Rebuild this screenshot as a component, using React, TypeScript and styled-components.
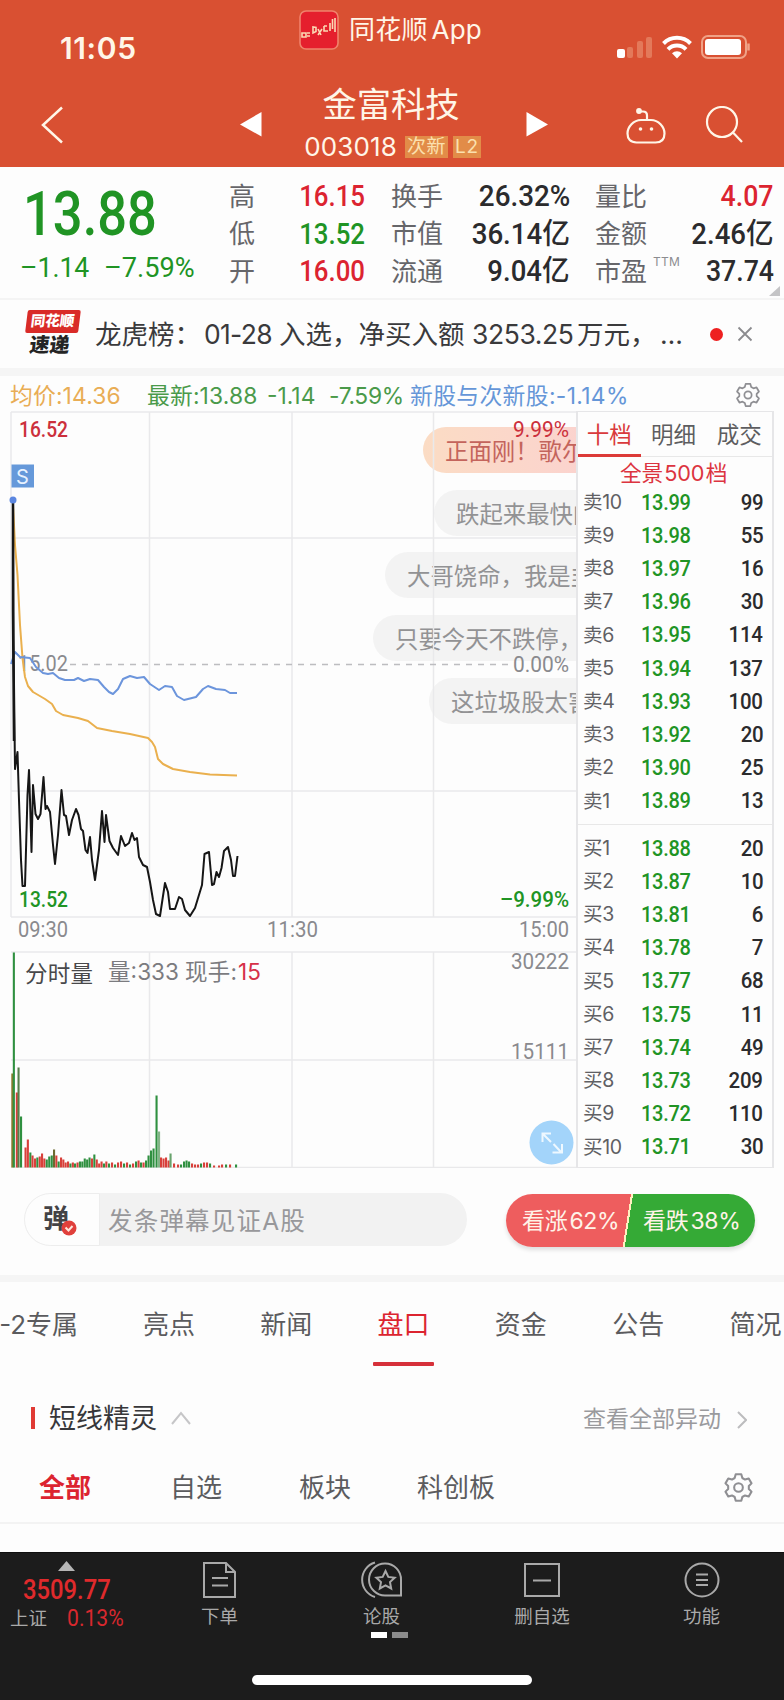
import React from "react";
import styled, { createGlobalStyle } from "styled-components";

const Global = createGlobalStyle`
  * { box-sizing: border-box; }
  body { margin: 0; background: #fdfdfd; }
`;

const C = {
  red: "#dc2430",
  green: "#209424",
  ink: "#2b2b2d",
  text: "#5b5b5e",
  line: "#ececec",
};

const Page = styled.div`
  width: 784px;
  height: 1700px;
  overflow: hidden;
  display: flex;
  flex-direction: column;
  background: #fdfdfd;
  color: ${C.text};
  font-family: Inter, "Noto Sans CJK SC", sans-serif;
  white-space: nowrap;
  line-height: 1;
`;

const Num = styled.span<{ $size: number; $color?: string; $weight?: number; $origin?: string; $sx?: number }>`
  display: inline-block;
  font-family: Roboto, "Noto Sans CJK SC", sans-serif;
  font-size: ${(p) => p.$size}px;
  font-weight: ${(p) => p.$weight ?? 500};
  color: ${(p) => p.$color ?? C.ink};
  line-height: 1;
  transform: scaleX(${(p) => p.$sx ?? 0.87});
  transform-origin: ${(p) => p.$origin ?? "left"} center;
`;

/* ---------- header ---------- */

const Header = styled.header`
  height: 167px;
  flex: none;
  background: #d95032;
  color: #fff6e8;
`;

const StatusBar = styled.div`
  height: 72px;
  display: grid;
  grid-template-columns: 1fr auto 1fr;
  align-items: start;
`;

const Clock = styled.div`
  padding: 33px 0 0 60px;
  font-size: 30px;
  font-weight: 600;
  letter-spacing: 0.6px;
`;

const AppBadge = styled.div`
  display: flex;
  align-items: center;
  gap: 10px;
  padding: 10px 3px 0 0;
  font-size: 26px;
  line-height: 40px;
  letter-spacing: 0.3px;
  word-spacing: -4px;
`;

const StatusIcons = styled.div`
  display: flex;
  justify-content: flex-end;
  padding: 34px 32px 0 0;
`;

const NavBar = styled.div`
  height: 95px;
  display: grid;
  grid-template-columns: 240px 22px 1fr 22px 236px;
  align-items: start;
`;

const NavSlot = styled.div<{ $top: number; $left?: number }>`
  display: flex;
  padding: ${(p) => p.$top}px 0 0 ${(p) => p.$left ?? 0}px;
`;

const TitleBlock = styled.div`
  display: flex;
  flex-direction: column;
  align-items: center;
  padding-top: 15px;
`;

const StockName = styled.div`
  font-size: 34.3px;
  line-height: 36px;
  margin-right: 6px;
`;

const CodeRow = styled.div`
  display: flex;
  align-items: center;
  gap: 5px;
  margin: 11px 3px 0 0;
  height: 26px;
`;

const Code = styled.span`
  font-size: 26px;
  letter-spacing: 0.1px;
  margin-right: 3px;
`;

const Tag = styled.span`
  height: 22px;
  padding: 0 2px;
  line-height: 22px;
  font-size: 19px;
  letter-spacing: 0.6px;
  background: #e28c48;
  color: #fbe0ae;
`;

/* ---------- quote summary ---------- */

const Summary = styled.section`
  height: 133px;
  flex: none;
  display: grid;
  grid-template-columns: 229px 136px 26px 179px 25px 179px;
  border-bottom: 2px solid #f4f4f4;
`;

const PriceBlock = styled.div`
  padding: 17px 0 0 20px;
`;

const BigPrice = styled.div`
  height: 70px;
  padding: 0 0 0 3px;
`;

const ChangeRow = styled.div`
  display: flex;
`;

const ChangeCell = styled.div`
  width: 84px;
`;

const StatColumn = styled.div<{ $col: number }>`
  grid-column: ${(p) => p.$col};
  padding-top: 11px;
`;

const StatRow = styled.div`
  height: 37.5px;
  display: flex;
  align-items: center;
  justify-content: space-between;
  font-size: 26px;
  color: #66666a;
  position: relative;
`;

const Sup = styled.sup`
  position: absolute;
  left: 58px;
  top: 3px;
  font-size: 12px;
  line-height: 12px;
  letter-spacing: 0.3px;
  color: #8c8c90;
`;

const Corner = styled.i`
  position: absolute;
  right: -6px;
  bottom: -5px;
  border-style: solid;
  border-width: 0 0 10px 11px;
  border-color: transparent transparent #c4c4c6 transparent;
`;

/* ---------- news line ---------- */

const News = styled.section`
  height: 68px;
  flex: none;
  display: flex;
  align-items: center;
  padding-left: 22px;
  font-size: 26.5px;
  color: #3a3a3c;
`;

const NewsLogo = styled.div`
  width: 58px;
  margin: -1px 15px 0 0;
  display: flex;
  flex-direction: column;
  align-items: center;
  transform: skewX(-7deg);
`;

const LogoTop = styled.div`
  width: 53px;
  height: 23px;
  background: #d92b28;
  border-radius: 2px;
  color: #fff;
  font-size: 14.5px;
  font-weight: 900;
  line-height: 22px;
  text-align: center;
`;

const LogoBottom = styled.div`
  color: #242424;
  font-size: 20px;
  font-weight: 900;
  line-height: 24px;
`;

const NewsText = styled.div`
  width: 595px;
  display: flex;
  align-items: center;
`;

const Run = styled.span<{ $w: number; $ls?: number }>`
  width: ${(p) => p.$w}px;
  letter-spacing: ${(p) => p.$ls ?? 0}px;
`;

const Dot = styled.i`
  width: 13px;
  height: 13px;
  margin: 0 14px 0 20px;
  border-radius: 50%;
  background: #ee2020;
`;

const Band = styled.div<{ $h: number }>`
  height: ${(p) => p.$h}px;
  flex: none;
  background: #f5f5f5;
`;

/* ---------- legend ---------- */

const Legend = styled.div`
  height: 35px;
  flex: none;
  display: flex;
  align-items: center;
  padding: 3px 0 0 10px;
  font-size: 22.8px;
`;

const LegendItem = styled.span<{ $w: number; $color: string; $ls?: number }>`
  width: ${(p) => p.$w}px;
  padding-top: 3px;
  color: ${(p) => p.$color};
  letter-spacing: ${(p) => p.$ls ?? 0.15}px;
`;

/* ---------- chart + order book ---------- */

const Market = styled.section`
  height: 757px;
  flex: none;
  display: flex;
`;

const ChartPane = styled.div`
  position: relative;
  width: 576px;
  overflow: hidden;
`;

const Bubble = styled.div<{ $x: number; $y: number; $hot?: boolean }>`
  position: absolute;
  left: ${(p) => p.$x}px;
  top: ${(p) => p.$y}px;
  height: 46px;
  width: 260px;
  padding-left: 22px;
  border-radius: 23px;
  line-height: 49px;
  font-size: 23.4px;
  color: ${(p) => (p.$hot ? "#c4645c" : "#929294")};
  background: ${(p) => (p.$hot ? "linear-gradient(90deg, #fbdcc4, #fbd3ce 60%)" : "#f3f3f3")};
`;

const ChartSvg = styled.svg`
  position: absolute;
  left: 0;
  top: 0;
`;

const Book = styled.div`
  width: 198px;
  border: 1px solid #e6e6e8;
  border-left-width: 2px;
  border-right-width: 2px;
`;

const BookTabs = styled.div`
  height: 45px;
  display: flex;
  border-bottom: 1px solid #e8e8e8;
`;

const BookTab = styled.div<{ $on?: boolean }>`
  width: ${(p) => (p.$on ? 63 : 66)}px;
  height: 45px;
  text-align: center;
  line-height: 45px;
  font-size: 22.5px;
  color: ${(p) => (p.$on ? "#d93a3c" : "#5d5d60")};
  border-bottom: ${(p) => (p.$on ? "3px solid #dc3a38" : "none")};
`;

const Depth = styled.div`
  height: 29px;
  padding-left: 42px;
  line-height: 32px;
  font-size: 21.7px;
  letter-spacing: -0.2px;
  word-spacing: -4.5px;
  color: #dc3440;
`;

const BookSide = styled.div`
  display: flex;
  flex-direction: column;
  height: 338px;
  & + & {
    border-top: 1px solid #e8e8e8;
    padding: 7px 0 0;
    height: 340px;
  }
`;

const BookRow = styled.div`
  height: 33.2px;
  flex: none;
  display: grid;
  grid-template-columns: 58px 1fr auto;
  align-items: center;
  padding: 0 9px 0 5px;
  font-size: 19.5px;
  letter-spacing: -0.3px;
  color: #606064;
`;

/* ---------- comment bar ---------- */

const ActionBar = styled.section`
  height: 107px;
  flex: none;
  display: flex;
  padding: 25px 0 0 24px;
`;

const CommentBox = styled.div`
  width: 443px;
  height: 53px;
  border-radius: 27px;
  display: flex;
  overflow: hidden;
  background: #f2f2f2;
  color: #98989b;
  font-size: 24.5px;
  letter-spacing: 1.2px;
  line-height: 56px;
`;

const DanmuToggle = styled.div`
  width: 76px;
  margin-right: 8px;
  padding: 0 0 0 18px;
  border: 1px solid #ededed;
  border-radius: 27px 0 0 27px;
  background: #fdfdfd;
  color: #434346;
  font-size: 26px;
  font-weight: 600;
  letter-spacing: 0;
  line-height: 50px;
  display: flex;
`;

const Check = styled.svg`
  margin: 26px 0 0 -8px;
`;

const Vote = styled.div`
  width: 249px;
  height: 53px;
  margin: 1px 0 0 39px;
  display: flex;
  border-radius: 27px;
  overflow: hidden;
  background: linear-gradient(99deg, #ee5d5e 0 123.5px, #fff0c0 123.5px 125.5px, #35aa36 125.5px);
  box-shadow: 0 3px 4px rgba(0, 0, 0, 0.12);
  color: #fff3e8;
  font-size: 23px;
  line-height: 55px;
`;

const VoteSide = styled.div`
  width: 121px;
  padding-left: 16px;
  letter-spacing: -0.35px;
  word-spacing: -4px;
`;

/* ---------- tabs ---------- */

const Tabs = styled.nav`
  height: 104px;
  flex: none;
  display: grid;
  grid-template-columns: repeat(7, 117.3px);
  margin-left: -7px;
  justify-content: start;
`;

const Tab = styled.div<{ $on?: boolean; $nudge?: number }>`
  padding-top: 25px;
  text-align: center;
  font-size: 26px;
  line-height: 36px;
  margin-left: ${(p) => p.$nudge ?? 0}px;
  color: ${(p) => (p.$on ? C.red : C.text)};
  &::after {
    content: "";
    display: block;
    width: 61px;
    height: 4px;
    margin: 19px auto 0;
    border-radius: 1px;
    background: ${(p) => (p.$on ? "#d6303a" : "transparent")};
  }
`;

const SectionHead = styled.div`
  height: 62px;
  flex: none;
  display: flex;
  align-items: center;
  padding: 2px 37px 0 31px;
`;

const Accent = styled.i`
  width: 4px;
  height: 22px;
  margin-right: 14px;
  background: #e03a34;
`;

const SectionTitle = styled.div`
  font-size: 27px;
  color: #37373a;
  margin-right: 14px;
`;

const More = styled.div`
  margin-left: auto;
  display: flex;
  align-items: center;
  gap: 16px;
  padding-top: 3px;
  font-size: 23px;
  color: #9a9a9d;
`;

const Filters = styled.div`
  height: 76px;
  flex: none;
  display: flex;
  align-items: center;
  padding: 5px 30px 0 39px;
  border-bottom: 2px solid #f3f3f3;
  font-size: 26px;
`;

const Filter = styled.div<{ $w: number; $on?: boolean }>`
  width: ${(p) => p.$w}px;
  font-weight: ${(p) => (p.$on ? 600 : 400)};
  color: ${(p) => (p.$on ? C.red : C.text)};
`;

/* ---------- bottom bar ---------- */

const Bottom = styled.footer`
  height: 148px;
  flex: none;
  margin-top: auto;
  background: #1c1c1c;
  color: #a9a9a9;
  border-top: 1px solid #0f0f0f;
  display: flex;
  flex-direction: column;
  align-items: center;
`;

const BottomRow = styled.div`
  width: 784px;
  height: 122px;
  display: grid;
  grid-template-columns: 141px 157px 167px 154px 165px;
`;

const IndexCell = styled.div`
  display: flex;
  flex-direction: column;
  padding: 8px 0 0 10px;
`;

const IndexLine = styled.div<{ $mt: number; $pl: number }>`
  display: flex;
  align-items: center;
  gap: 20px;
  margin-top: ${(p) => p.$mt}px;
  padding-left: ${(p) => p.$pl}px;
  font-size: 18.5px;
`;

const BottomItem = styled.div`
  display: flex;
  flex-direction: column;
  align-items: center;
  padding-top: 8px;
  font-size: 18.5px;
  gap: 9px;
`;

const Pager = styled.div`
  display: flex;
  gap: 5px;
  margin: -3px 0 0 16px;
`;

const PageMark = styled.i<{ $on?: boolean }>`
  width: 16px;
  height: 6px;
  background: ${(p) => (p.$on ? "#fff" : "#8b8b8b")};
`;

const HomeBar = styled.div`
  width: 280px;
  height: 10px;
  border-radius: 5px;
  background: #fff;
`;

/* ---------- icons ---------- */

const Gear = ({ size }: { size: number }) => (
  <svg width={size} height={size} viewBox="0 0 30 30" fill="none" stroke="#8f8f93" strokeWidth="2" strokeLinejoin="round">
    <path d="M12.3 2.2h5.4l1 3.6 2.6 1.5 3.6-1 2.7 4.7-2.6 2.6v2.8l2.6 2.6-2.7 4.7-3.6-1-2.6 1.5-1 3.6h-5.4l-1-3.6-2.6-1.5-3.6 1L2.4 19 5 16.4v-2.8L2.4 11l2.7-4.7 3.6 1 2.6-1.5z" />
    <circle cx="15" cy="15" r="4.2" />
  </svg>
);

const AppLogo = () => (
  <svg width="40" height="40" viewBox="0 0 40 40">
    <rect x="1" y="1" width="38" height="38" rx="6" fill="#e51f2d" stroke="#f0826c" strokeWidth="1.6" />
    <g fill="none" stroke="#fbd9b4" strokeWidth="1.6">
      <path d="M3 23h4v4H3zM8 23h3M8 26h3M14 17v6l3-1.500v-4zM19 19l3 6M19 25l4-6M25 16v5h4M25 16h3M31 13v8M33.500 9v10M36 8v14" />
    </g>
  </svg>
);

const Signals = () => (
  <svg width="136" height="26" viewBox="0 0 136 26">
    <rect x="1" y="15" width="8" height="9" rx="2" fill="#fff" />
    <g fill="#e3795a">
      <rect x="11" y="13" width="6" height="11" rx="2" />
      <rect x="21" y="7" width="6" height="17" rx="2" />
      <rect x="30" y="3" width="6" height="21" rx="2" />
    </g>
    <g fill="none" stroke="#fff" strokeWidth="4">
      <path d="M47.5 9.5a19 19 0 0 1 27 0" />
      <path d="M52 15.3a12.500 12.500 0 0 1 18 0" />
    </g>
    <path d="M61 24.500l-5-5.200a7.200 7.200 0 0 1 10 0z" fill="#fff" />
    <rect x="86" y="2" width="44" height="22" rx="6" fill="none" stroke="#f0a287" strokeWidth="2" />
    <rect x="89" y="5" width="36" height="16" rx="3" fill="#fff" />
    <path d="M132.500 9.500v7" stroke="#f0a287" strokeWidth="2.500" />
  </svg>
);

/* ---------- data ---------- */

type Pt = [number, number];

const priceLine: Pt[] = [
  [13, 499], [13.5, 640], [15, 769], [17.5, 752], [19, 800], [21, 860], [22.5, 886], [25, 886], [26, 850], [27.5, 795], [29, 770],
  [30, 800], [31.5, 852], [33, 785], [35.5, 814], [38, 819], [40.5, 814], [43.5, 777], [45.5, 809], [47, 806], [50, 812],
  [53, 845], [55, 864], [58, 835], [61.5, 790], [64, 815], [66, 816], [69, 835], [72, 820], [76, 809], [78.5, 815], [81, 829],
  [83, 831], [85.5, 850], [87.5, 853], [90, 837], [92, 860], [95, 880], [99, 850], [102, 811], [104.5, 842], [106, 815], [109.5, 841],
  [113, 848], [118, 855], [121, 836], [125, 846], [129, 843], [132, 833], [134.5, 840], [137, 838], [139, 857], [143, 865], [147, 867],
  [150, 882], [153, 900], [156, 914], [160, 916], [163, 896], [165, 883], [168, 892], [170, 909], [175, 909], [179, 897], [182, 899],
  [185, 910], [190, 916], [195, 908], [202, 885], [204.5, 854], [209, 852], [212, 885], [214, 884], [216.5, 872], [219, 877],
  [221.5, 868], [224, 851], [228, 847], [231, 860], [233, 876], [235, 876], [237.5, 856],
];

const averageLine: Pt[] = [
  [13, 505], [15, 545], [17.5, 575], [20, 625], [22.5, 658], [25, 677], [28, 686], [33, 692], [45, 699], [52, 704], [56, 711],
  [63, 715], [78, 718], [88, 721], [97, 728], [112, 731], [130, 734], [148, 738], [152, 742], [155, 747], [158, 759], [163, 764],
  [173, 769], [190, 772], [210, 774.5], [237, 775.5],
];

const sectorLine: Pt[] = [
  [11, 664], [15, 652], [20, 657], [30, 658], [36, 667], [43, 673], [48, 674], [53, 673], [59, 678], [65, 680], [74, 680], [78, 678],
  [84, 681], [90, 679], [98, 680], [104, 687], [109, 692], [113, 694], [118, 689], [123, 679], [130, 676], [137, 678], [144, 677],
  [150, 684], [159, 690], [165, 686], [172, 687], [177, 696], [184, 700], [196, 697], [203, 689], [208, 686], [216, 689], [225, 690],
  [230, 693], [237, 693],
];

const CHART_TOP = 411;
const toPoints = (pts: Pt[]) => pts.map(([x, y]) => `${x},${y - CHART_TOP}`).join(" ");

const R = "#d8403a";
const G = "#2f9040";
const volumes: [number, number, string][] = [
  [12.3, 94, "#8c7a2c"], [13.8, 215, G], [16.8, 75, R], [18.5, 100, "#557f4a"], [21, 51, G], [25.5, 20, R], [27.8, 28, R],
  [30.3, 15, G], [32.5, 12, R], [35, 9, R], [37.3, 10, G], [39.7, 11, R], [42, 14, R], [44.3, 9, R], [46.7, 8, G], [49.2, 11, G],
  [51.7, 12, G], [54, 18, "#6c6a30"], [56.3, 12, R], [58.6, 6, G], [61, 10, R], [63.3, 8, R], [65.6, 5, R], [68, 6, R], [70.4, 4, G],
  [72.8, 5, R], [75, 4, G], [77.5, 5, R], [79.9, 6, G], [82.3, 6, G], [84.7, 9, G], [87.1, 8, G], [89.5, 10, G], [91.9, 9, R],
  [94.3, 13, G], [96.7, 8, R], [99.1, 4, R], [101.5, 6, R], [103.9, 4, G], [106.3, 6, R], [109, 4, G], [112, 5, R], [115, 3, G],
  [118, 5, R], [121, 6, R], [124, 4, G], [127, 5, R], [130, 3, G], [133, 4, R], [136, 6, G], [138.5, 7, R], [141, 5, G], [143.5, 5, R],
  [146, 7, G], [148.5, 12, G], [151, 17, G], [153.5, 19, G], [156.5, 72, G], [159, 36, "#83b487"], [161, 10, R], [163.5, 9, R],
  [166, 10, R], [168.5, 7, R], [170.5, 14, "#68a36c"], [174, 4, R], [178, 3, R], [181, 3, G], [184, 6, G], [186.5, 7, G], [189, 6, G],
  [192, 4, R], [195, 3, R], [198, 3, R], [201, 4, G], [204, 5, R], [207, 5, R], [210, 4, G], [214, 2, R], [219, 2, R], [222, 3, R],
  [226, 3, G], [230, 3, R], [236, 3, G],
];

const sells: [string, string, string][] = [
  ["卖10", "13.99", "99"], ["卖9", "13.98", "55"], ["卖8", "13.97", "16"], ["卖7", "13.96", "30"], ["卖6", "13.95", "114"],
  ["卖5", "13.94", "137"], ["卖4", "13.93", "100"], ["卖3", "13.92", "20"], ["卖2", "13.90", "25"], ["卖1", "13.89", "13"],
];
const buys: [string, string, string][] = [
  ["买1", "13.88", "20"], ["买2", "13.87", "10"], ["买3", "13.81", "6"], ["买4", "13.78", "7"], ["买5", "13.77", "68"],
  ["买6", "13.75", "11"], ["买7", "13.74", "49"], ["买8", "13.73", "209"], ["买9", "13.72", "110"], ["买10", "13.71", "30"],
];

const stats: { col: number; rows: [string, string, string, number][] }[] = [
  { col: 2, rows: [["高", "16.15", C.red, 0.89], ["低", "13.52", C.green, 0.89], ["开", "16.00", C.red, 0.89]] },
  { col: 4, rows: [["换手", "26.32%", C.ink, 0.96], ["市值", "36.14亿", C.ink, 0.955], ["流通", "9.04亿", C.ink, 0.95]] },
  { col: 6, rows: [["量比", "4.07", C.red, 0.92], ["金额", "2.46亿", C.ink, 0.95], ["市盈", "37.74", C.ink, 0.92]] },
];

const AxisLabel = ({ x, y, w, fill, weight = 400, children }: { x: number; y: number; w: number; fill: string; weight?: number; children: string }) => (
  <text x={x} y={y - CHART_TOP} textLength={w} lengthAdjust="spacingAndGlyphs" fill={fill} fontWeight={weight} fontSize="22" fontFamily="Roboto, sans-serif">
    {children}
  </text>
);

const Chart = () => (
  <ChartPane>
    <Bubble $x={423} $y={16} $hot>正面刚！歌尔</Bubble>
    <Bubble $x={434} $y={79}>跌起来最快的</Bubble>
    <Bubble $x={385} $y={141}>大哥饶命，我是韭</Bubble>
    <Bubble $x={373} $y={204}>只要今天不跌停，</Bubble>
    <Bubble $x={429} $y={267}>这垃圾股太害</Bubble>
    <ChartSvg width="577" height="757" viewBox="0 0 577 757">
      <g stroke="#e9e9eb" strokeWidth="1.5" fill="none">
        <path d="M11 1H577M11 127H577M11 380H577M11 506H577M11 1V506M149.500 1V506M292 1V506M433.500 1V506" />
        <path d="M11 541H577M11 649H577M11 756.500H577M149.500 541V757M292 541V757M433.500 541V757" />
      </g>
      <path d="M70 253.500H512" stroke="#bdbdc0" strokeWidth="1.5" strokeDasharray="6 6" />
      <AxisLabel x={18} y={671} w={50} fill="#8a8a8e">15.02</AxisLabel>
      <g fill="none" strokeWidth="2" strokeLinejoin="round">
        <polyline points={toPoints(averageLine)} stroke="#eab04e" />
        <polyline points={toPoints(sectorLine)} stroke="#6c95dc" />
        <polyline points={toPoints(priceLine)} stroke="#161616" />
      </g>
      <path d="M13 89V200L14 330" stroke="#161616" strokeWidth="2.5" fill="none" />
      <circle cx="13" cy="89" r="3.5" fill="#5b86e0" />
      <rect x="11.5" y="53.5" width="22.500" height="23" fill="#6699da" />
      <text x="16" y="72.500" fontSize="20" fill="#e8f2ff" fontFamily="Inter, sans-serif">S</text>
      <AxisLabel x={19} y={436.5} w={49} fill="#cc303c" weight={500}>16.52</AxisLabel>
      <AxisLabel x={513} y={436.5} w={56} fill="#cc303c">9.99%</AxisLabel>
      <AxisLabel x={513} y={671.5} w={56} fill="#8a8a8e">0.00%</AxisLabel>
      <AxisLabel x={19} y={907} w={49} fill={C.green} weight={500}>13.52</AxisLabel>
      <AxisLabel x={500} y={907} w={69} fill={C.green} weight={500}>–9.99%</AxisLabel>
      <AxisLabel x={18} y={936.5} w={50} fill="#8a8a8e">09:30</AxisLabel>
      <AxisLabel x={267} y={936.5} w={51} fill="#8a8a8e">11:30</AxisLabel>
      <AxisLabel x={519} y={936.5} w={50} fill="#8a8a8e">15:00</AxisLabel>
      <AxisLabel x={511} y={969} w={58} fill="#8a8a8e">30222</AxisLabel>
      <AxisLabel x={511} y={1059} w={58} fill="#8a8a8e">15111</AxisLabel>
      {volumes.map(([x, h, c], i) => (
        <rect key={i} x={x - 1} y={756.5 - h} width={2.1} height={h} fill={c} />
      ))}
      <g fontFamily='Inter, "Noto Sans CJK SC", sans-serif' fontSize="22.5" fill="#7b7b7f">
        <text x="25" y="571" textLength="68" fill="#48484a">分时量</text>
        <text x="108" y="569" textLength="71">量:333</text>
        <text x="185" y="569" textLength="52">现手:</text>
        <text x="238" y="569" textLength="23" fill="#d63048">15</text>
      </g>
      <circle cx="551.5" cy="731.5" r="22" fill="#a3d4fa" />
      <path d="M542.500 731V722.500H551M543 723L551 731M553.500 733L561 741M552.500 741.500H562V733" stroke="#eef8ff" strokeWidth="2" fill="none" />
    </ChartSvg>
  </ChartPane>
);

const Side = ({ rows }: { rows: [string, string, string][] }) => (
  <BookSide>
    {rows.map(([label, price, qty]) => (
      <BookRow key={label}>
        <span>{label}</span>
        <Num $size={22} $color={C.green} $sx={0.91}>{price}</Num>
        <Num $size={22} $sx={0.93} $origin="right">{qty}</Num>
      </BookRow>
    ))}
  </BookSide>
);

export default function App() {
  return (
    <Page>
      <Global />
      <Header>
        <StatusBar>
          <Clock>11:05</Clock>
          <AppBadge>
            <AppLogo />
            <span>同花顺 App</span>
          </AppBadge>
          <StatusIcons>
            <Signals />
          </StatusIcons>
        </StatusBar>
        <NavBar>
          <NavSlot $top={34} $left={41}>
            <svg width="22" height="38" fill="none" stroke="currentColor" strokeWidth="2.5"><path d="M21 1.500L2 19l19 17.500" /></svg>
          </NavSlot>
          <NavSlot $top={40}>
            <svg width="22" height="25" fill="#fff"><path d="M21.500 0v24.500L0 12.500z" /></svg>
          </NavSlot>
          <TitleBlock>
            <StockName>金富科技</StockName>
            <CodeRow>
              <Code>003018</Code>
              <Tag>次新</Tag>
              <Tag>L2</Tag>
            </CodeRow>
          </TitleBlock>
          <NavSlot $top={40}>
            <svg width="22" height="25" fill="#fff"><path d="M.5 0v24.500L22 12.500z" /></svg>
          </NavSlot>
          <NavSlot $top={34} $left={78}>
            <svg width="120" height="40" fill="none" stroke="currentColor" strokeWidth="2.2">
              <path d="M10.500 36.500c-6 0-9-3.500-9-9 0-6.500 6-13.500 13.500-13.500h10c7.500 0 13.500 7 13.500 13.500 0 5.500-3 9-9 9z" />
              <path d="M21 14V9.500c0-2.500-1.500-4-4-4h-2" />
              <circle cx="13" cy="5" r="1.8" fill="currentColor" />
              <circle cx="14.5" cy="23" r="1.8" fill="currentColor" stroke="none" />
              <circle cx="25.5" cy="23" r="1.8" fill="currentColor" stroke="none" />
              <circle cx="96" cy="16" r="15" />
              <path d="M106.500 26l9.500 10" />
            </svg>
          </NavSlot>
        </NavBar>
      </Header>

      <Summary>
        <PriceBlock>
          <BigPrice>
            <Num $size={61} $color={C.green} $sx={0.86}>13.88</Num>
          </BigPrice>
          <ChangeRow>
            <ChangeCell><Num $size={28} $color={C.green} $weight={400} $sx={0.95}>–1.14</Num></ChangeCell>
            <ChangeCell><Num $size={28} $color={C.green} $weight={400} $sx={0.97}>–7.59%</Num></ChangeCell>
          </ChangeRow>
        </PriceBlock>
        {stats.map(({ col, rows }) => (
          <StatColumn key={col} $col={col}>
            {rows.map(([k, v, color, sx]) => (
              <StatRow key={k}>
                <span>{k}</span>
                {k === "市盈" && <Sup>TTM</Sup>}
                <Num $size={29} $color={color} $origin="right" $sx={sx}>{v}</Num>
                {k === "市盈" && <Corner />}
              </StatRow>
            ))}
          </StatColumn>
        ))}
      </Summary>

      <News>
        <NewsLogo>
          <LogoTop>同花顺</LogoTop>
          <LogoBottom>速递</LogoBottom>
        </NewsLogo>
        <NewsText>
          <Run $w={109}>龙虎榜：</Run>
          <Run $w={75} $ls={-0.7}>01-28</Run>
          <Run $w={193}>入选，净买入额</Run>
          <Run $w={105} $ls={-0.4}>3253.25</Run>
          <Run $w={83}>万元，</Run>
          <Run $w={30}>…</Run>
        </NewsText>
        <Dot />
        <svg width="16" height="16" stroke="#8b8b8e" strokeWidth="1.8"><path d="M1.500 1.500l13 13M14.500 1.500l-13 13" /></svg>
      </News>
      <Band $h={8} />

      <Legend>
        <LegendItem $w={137} $color="#e9ad55">均价:14.36</LegendItem>
        <LegendItem $w={120} $color="#4a9a4a">最新:13.88</LegendItem>
        <LegendItem $w={62} $color="#4a9a4a" $ls={0}>-1.14</LegendItem>
        <LegendItem $w={81} $color="#4a9a4a" $ls={-0.3}>-7.59%</LegendItem>
        <LegendItem $w={325} $color="#6596d8" $ls={0.35}>新股与次新股:-1.14%</LegendItem>
        <Gear size={26} />
      </Legend>

      <Market>
        <Chart />
        <Book>
          <BookTabs>
            <BookTab $on>十档</BookTab>
            <BookTab>明细</BookTab>
            <BookTab>成交</BookTab>
          </BookTabs>
          <Depth>全景 500 档</Depth>
          <Side rows={sells} />
          <Side rows={buys} />
        </Book>
      </Market>

      <ActionBar>
        <CommentBox>
          <DanmuToggle>
            弹
            <Check width="16" height="16" viewBox="0 0 16 16">
              <circle cx="8" cy="8" r="7.5" fill="#e0403c" />
              <path d="M4.500 7.500L7.500 10.500L11.500 6" stroke="#ffe6dc" strokeWidth="2" fill="none" />
            </Check>
          </DanmuToggle>
          发条弹幕见证A股
        </CommentBox>
        <Vote>
          <VoteSide>看涨 62%</VoteSide>
          <VoteSide>看跌 38%</VoteSide>
        </Vote>
      </ActionBar>
      <Band $h={7} />

      <Tabs>
        {["-2专属", "亮点", "新闻", "盘口", "资金", "公告", "简况"].map((t, i) => (
          <Tab key={t} $on={t === "盘口"} $nudge={i === 0 ? -26 : 0}>{t}</Tab>
        ))}
      </Tabs>

      <SectionHead>
        <Accent />
        <SectionTitle>短线精灵</SectionTitle>
        <svg width="20" height="14" fill="none" stroke="#c6c6c8" strokeWidth="2"><path d="M1 13L10 2l9 11" /></svg>
        <More>
          查看全部异动
          <svg width="10" height="18" fill="none" stroke="#bcbcbe" strokeWidth="2"><path d="M1 1l8 8-8 8" /></svg>
        </More>
      </SectionHead>
      <Filters>
        <Filter $w={131} $on>全部</Filter>
        <Filter $w={129}>自选</Filter>
        <Filter $w={118}>板块</Filter>
        <Filter $w={306}>科创板</Filter>
        <Gear size={31} />
      </Filters>

      <Bottom>
        <BottomRow>
          <IndexCell>
            <svg width="113" height="10" fill="#b5b5b5"><path d="M56.500 0l8.500 10H48z" /></svg>
            <IndexLine $mt={5} $pl={13}>
              <Num $size={28} $color="#e02a2c" $sx={0.85}>3509.77</Num>
            </IndexLine>
            <IndexLine $mt={3} $pl={0}>
              <span>上证</span>
              <Num $size={23} $color="#d8282e" $weight={400} $sx={0.92}>0.13%</Num>
            </IndexLine>
          </IndexCell>
          <BottomItem>
            <svg width="36" height="37" fill="none" stroke="currentColor" strokeWidth="2">
              <path d="M2 2h22l9 9v25H2zM24 2v9h9M10 17h16M10 24.500h16" />
            </svg>
            下单
          </BottomItem>
          <BottomItem>
            <svg width="42" height="37" fill="none" stroke="currentColor" strokeWidth="2">
              <path d="M40 34.500H24.500A16 16 0 1 1 40 19zM14 1.500A18 18 0 0 0 14 36" />
              <path d="M24.500 10l2.800 5.900 6.400.8-4.700 4.400 1.200 6.400-5.700-3.100-5.700 3.100 1.200-6.400-4.700-4.400 6.400-.8z" />
            </svg>
            论股
            <Pager>
              <PageMark $on />
              <PageMark />
            </Pager>
          </BottomItem>
          <BottomItem>
            <svg width="36" height="37" fill="none" stroke="currentColor" strokeWidth="2">
              <path d="M1 3h34v32H1zM9 19.500h18" />
            </svg>
            删自选
          </BottomItem>
          <BottomItem>
            <svg width="36" height="37" fill="none" stroke="currentColor" strokeWidth="2">
              <circle cx="18" cy="19" r="16.5" />
              <path d="M12 13.500h12M12 19h12M12 24h12" />
            </svg>
            功能
          </BottomItem>
        </BottomRow>
        <HomeBar />
      </Bottom>
    </Page>
  );
}
